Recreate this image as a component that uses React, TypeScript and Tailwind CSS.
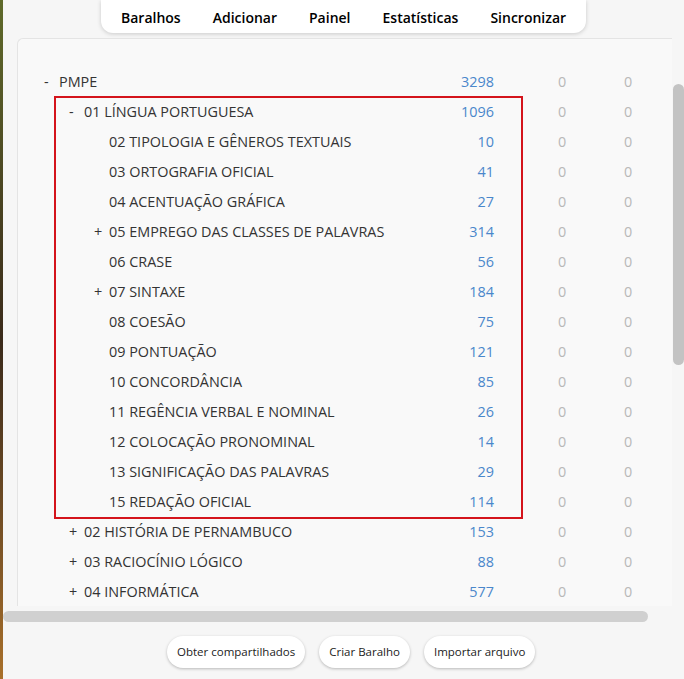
import { ReactNode } from 'react'

type Deck = {
  name: string
  count: number
  depth: number
  toggle?: '-' | '+'
}

const decks: Deck[] = [
  { name: 'PMPE', count: 3298, depth: 0, toggle: '-' },
  { name: '01 LÍNGUA PORTUGUESA', count: 1096, depth: 1, toggle: '-' },
  { name: '02 TIPOLOGIA E GÊNEROS TEXTUAIS', count: 10, depth: 2 },
  { name: '03 ORTOGRAFIA OFICIAL', count: 41, depth: 2 },
  { name: '04 ACENTUAÇÃO GRÁFICA', count: 27, depth: 2 },
  { name: '05 EMPREGO DAS CLASSES DE PALAVRAS', count: 314, depth: 2, toggle: '+' },
  { name: '06 CRASE', count: 56, depth: 2 },
  { name: '07 SINTAXE', count: 184, depth: 2, toggle: '+' },
  { name: '08 COESÃO', count: 75, depth: 2 },
  { name: '09 PONTUAÇÃO', count: 121, depth: 2 },
  { name: '10 CONCORDÂNCIA', count: 85, depth: 2 },
  { name: '11 REGÊNCIA VERBAL E NOMINAL', count: 26, depth: 2 },
  { name: '12 COLOCAÇÃO PRONOMINAL', count: 14, depth: 2 },
  { name: '13 SIGNIFICAÇÃO DAS PALAVRAS', count: 29, depth: 2 },
  { name: '15 REDAÇÃO OFICIAL', count: 114, depth: 2 },
  { name: '02 HISTÓRIA DE PERNAMBUCO', count: 153, depth: 1, toggle: '+' },
  { name: '03 RACIOCÍNIO LÓGICO', count: 88, depth: 1, toggle: '+' },
  { name: '04 INFORMÁTICA', count: 577, depth: 1, toggle: '+' },
]

const indent = ['pl-[26px]', 'pl-[51px]', 'pl-[76px]']

function DeckRow({ deck }: { deck: Deck }) {
  return (
    <div className={`flex items-center h-[30px] pr-[11px] ${indent[deck.depth]}`}>
      <span className="w-[15px] shrink-0 text-[#333]">{deck.toggle ?? ''}</span>
      <span className="flex-1 whitespace-nowrap text-[#333]">{deck.name}</span>
      <span className="w-[60px] text-right text-[#4a87cb]">{deck.count}</span>
      <span className="w-[35px]" />
      <span className="w-[66px] text-center text-[#b8b8b8]">0</span>
      <span className="w-[66px] text-center text-[#b8b8b8]">0</span>
    </div>
  )
}

function PillButton({ children }: { children: ReactNode }) {
  return (
    <button className="h-[32px] px-[10px] rounded-[16px] bg-white text-[11.5px] text-[#222] shadow-[0_1px_3px_rgba(0,0,0,0.25)]">
      {children}
    </button>
  )
}

export default function App() {
  const nav = ['Baralhos', 'Adicionar', 'Painel', 'Estatísticas', 'Sincronizar']

  return (
    <div
      className="w-[684px] h-[679px] flex overflow-hidden bg-[#f6f6f6]"
      style={{ fontFamily: '"Open Sans", "Noto Sans", sans-serif' }}
    >
      {/* wallpaper edge */}
      <div className="w-[3px] shrink-0 bg-gradient-to-b from-[#5f6a2a] via-[#3a2a1a] to-[#a9702a]" />

      <div className="flex-1 flex flex-col">
        {/* top toolbar */}
        <div className="flex h-[38px] pl-[98px]">
          <nav className="h-[33px] pt-[2px] flex items-center gap-[32px] px-[20px] bg-white rounded-b-[12px] shadow-[0_1px_4px_rgba(0,0,0,0.18)] text-[14px] font-semibold text-black">
            {nav.map((item) => (
              <span key={item}>{item}</span>
            ))}
          </nav>
        </div>

        {/* deck list */}
        <div className="flex h-[568px]">
          <div className="flex-1 pl-[14px]">
            <div className="relative h-full border-l border-t border-[#e4e4e4] rounded-tl-[6px] bg-[#f9f9f9] overflow-hidden pt-[28px] text-[14.4px]">
              {decks.map((deck) => (
                <DeckRow key={deck.name} deck={deck} />
              ))}
              <div className="absolute left-[36px] top-[57px] w-[469px] h-[423px] border-2 border-[#d4141c] pointer-events-none" />
            </div>
          </div>
          <div className="w-[12px] pl-[1px] pt-[46px]">
            <div className="h-[281px] rounded-[6px] bg-[#c3c3c3]" />
          </div>
        </div>

        {/* horizontal scrollbar */}
        <div className="mt-[5px] h-[11px] w-[645px] rounded-[6px] bg-[#d0d0d0]" />

        {/* actions */}
        <div className="flex gap-[14px] mt-[14px] pl-[164px]">
          <PillButton>Obter compartilhados</PillButton>
          <PillButton>Criar Baralho</PillButton>
          <PillButton>Importar arquivo</PillButton>
        </div>
      </div>
    </div>
  )
}
